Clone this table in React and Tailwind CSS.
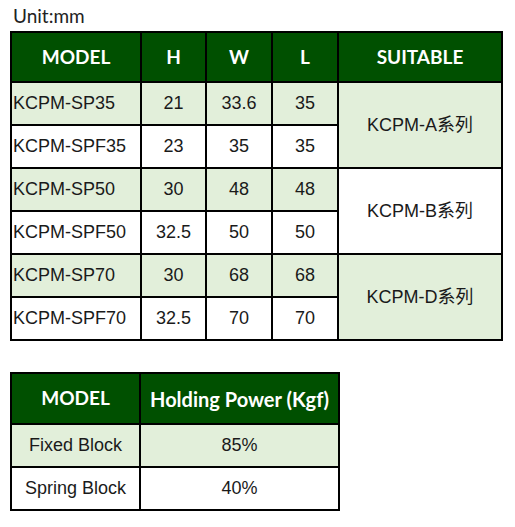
const specs = [
  { model: "KCPM-SP35", h: "21", w: "33.6", l: "35", green: true, suit: "KCPM-A系列" },
  { model: "KCPM-SPF35", h: "23", w: "35", l: "35", green: false },
  { model: "KCPM-SP50", h: "30", w: "48", l: "48", green: true, suit: "KCPM-B系列", suitGreen: false },
  { model: "KCPM-SPF50", h: "32.5", w: "50", l: "50", green: false },
  { model: "KCPM-SP70", h: "30", w: "68", l: "68", green: true, suit: "KCPM-D系列", suitGreen: true },
  { model: "KCPM-SPF70", h: "32.5", w: "70", l: "70", green: false },
];

const power = [
  { model: "Fixed Block", value: "85%", green: true },
  { model: "Spring Block", value: "40%", green: false },
];

const head = "border-2 border-black bg-[#005000] text-white font-bold text-[19px] font-['Lato','Open_Sans',sans-serif] text-center";
const cell = "border-2 border-black text-[18px] text-[#1a1a1a]";

export default function App() {
  return (
    <div className="w-[515px] h-[527px] bg-white font-['Liberation_Sans',Arial,sans-serif]">
      <div className="h-[31px] pl-[13px] pt-[6px] text-[19px] leading-[20px] text-[#222] font-['Lato','Open_Sans',sans-serif]">
        Unit:mm
      </div>
      <table className="ml-[10px] border-collapse table-fixed w-[491px]">
        <colgroup>
          <col className="w-[130px]" />
          <col className="w-[65px]" />
          <col className="w-[66px]" />
          <col className="w-[66px]" />
          <col className="w-[164px]" />
        </colgroup>
        <thead>
          <tr className="h-[50px]">
            <th className={head}>MODEL</th>
            <th className={head}>H</th>
            <th className={head}>W</th>
            <th className={head}>L</th>
            <th className={head}>SUITABLE</th>
          </tr>
        </thead>
        <tbody>
          {specs.map((r) => (
            <tr key={r.model} className={`h-[43px] ${r.green ? "bg-[#e2efda]" : "bg-white"}`}>
              <td className={`${cell} text-left pl-[1px]`}>{r.model}</td>
              <td className={`${cell} text-center`}>{r.h}</td>
              <td className={`${cell} text-center`}>{r.w}</td>
              <td className={`${cell} text-center`}>{r.l}</td>
              {r.suit && (
                <td
                  rowSpan={2}
                  className={`${cell} text-center font-['Liberation_Sans','Noto_Sans_CJK_TC',sans-serif] ${
                    r.suitGreen === false ? "bg-white" : "bg-[#e2efda]"
                  }`}
                >
                  {r.suit}
                </td>
              )}
            </tr>
          ))}
        </tbody>
      </table>

      <table className="ml-[10px] mt-[31px] border-collapse table-fixed w-[328px]">
        <colgroup>
          <col className="w-[129px]" />
          <col className="w-[199px]" />
        </colgroup>
        <thead>
          <tr className="h-[51px]">
            <th className={head}>MODEL</th>
            <th className={`${head} text-[20px]`}>Holding Power (Kgf)</th>
          </tr>
        </thead>
        <tbody>
          {power.map((r) => (
            <tr key={r.model} className={`h-[43px] ${r.green ? "bg-[#e2efda]" : "bg-white"}`}>
              <td className={`${cell} text-center`}>{r.model}</td>
              <td className={`${cell} text-center`}>{r.value}</td>
            </tr>
          ))}
        </tbody>
      </table>
    </div>
  );
}
